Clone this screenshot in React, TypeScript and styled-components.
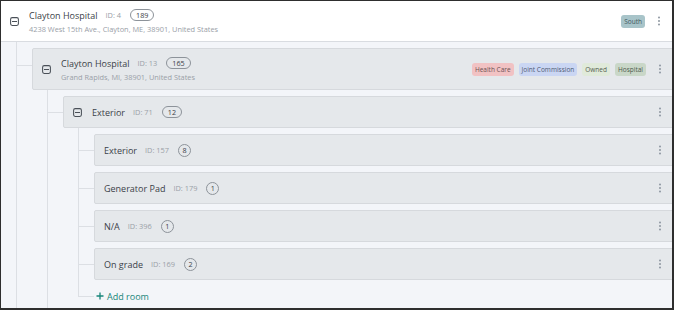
import { createGlobalStyle } from 'styled-components';
import styled from 'styled-components';

const GlobalStyle = createGlobalStyle`
  html, body { margin: 0; padding: 0; }
  body { font-family: "Open Sans", "Liberation Sans", sans-serif; color: #3a4047; }
`;

const Frame = styled.div`
  box-sizing: border-box;
  width: 674px;
  height: 310px;
  border: 1px solid #2e2e2e;
  border-right-width: 2px;
  border-bottom-width: 2px;
  background: #f3f5f9;
  display: flex;
  flex-direction: column;
  overflow: hidden;
`;

const TopRow = styled.div`
  flex: none;
  height: 40px;
  background: #fff;
  border-bottom: 1px solid #d9dce1;
  display: flex;
  align-items: center;
  padding: 0 8px 0 9px;
`;

const Body = styled.div`
  flex: 1;
  display: flex;
  flex-direction: column;
  margin-left: 15px;
  border-left: 1px solid #dcdfe4;
  padding: 6px 0 0 15px;
`;

const Node = styled.div`
  flex: 1;
  display: flex;
  flex-direction: column;
`;

const Card = styled.div<{ $h: number; $line?: number }>`
  position: relative;
  flex: none;
  box-sizing: border-box;
  height: ${(p) => p.$h}px;
  margin-right: -4px;
  background: #e5e8eb;
  border: 1px solid #d6d9dd;
  border-radius: 2px;
  display: flex;
  align-items: center;
  padding: 0 10px 0 9px;

  &::before {
    content: '';
    position: absolute;
    left: -16px;
    width: 15px;
    top: ${(p) => (p.$line ? `${p.$line}px` : '50%')};
    border-top: 1px solid #dcdfe4;
  }
`;

const Children = styled.div<{ $gap: number }>`
  flex: 1;
  display: flex;
  flex-direction: column;
  margin-left: 15px;
  border-left: 1px solid #dcdfe4;
  padding: ${(p) => p.$gap}px 0 0 15px;
`;

const RoomList = styled.div`
  display: flex;
  flex-direction: column;
  gap: 6px;
  margin-left: 15px;
  border-left: 1px solid #dcdfe4;
  padding: 6px 0 8px 15px;
`;

const AddRow = styled.div`
  position: relative;
  margin-left: 15px;
  height: 16px;
  display: flex;
  align-items: center;
  padding-left: 18px;
  font-size: 9px;
  color: #17857a;
  gap: 3px;

  &::before {
    content: '';
    position: absolute;
    left: 0;
    top: 0;
    width: 15px;
    height: 8px;
    border-left: 1px solid #dcdfe4;
    border-bottom: 1px solid #dcdfe4;
  }
`;

const Toggle = styled.svg`
  flex: none;
  width: 9px;
  height: 9px;
  margin-right: 10px;
`;

const Info = styled.div`
  display: flex;
  flex-direction: column;
  min-width: 0;
`;

const TitleLine = styled.div`
  display: flex;
  align-items: center;
`;

const Title = styled.span`
  font-size: 9px;
  color: #3b4148;
`;

const Id = styled.span`
  font-size: 7.4px;
  color: #9aa0a7;
  margin-left: 8px;
`;

const Count = styled.span<{ $round?: boolean }>`
  box-sizing: border-box;
  margin-left: 9px;
  height: ${(p) => (p.$round ? 13 : 12)}px;
  min-width: ${(p) => (p.$round ? 13 : 12)}px;
  padding: 0 ${(p) => (p.$round ? 0 : 5)}px;
  border: 1px solid #8d939a;
  border-radius: 7px;
  font-size: 7.2px;
  line-height: ${(p) => (p.$round ? 11 : 10)}px;
  text-align: center;
  color: #3b4148;
`;

const Address = styled.div`
  font-size: 7.4px;
  color: #9aa0a7;
  margin-top: 2px;
`;

const Spacer = styled.div`
  flex: 1;
`;

const Tags = styled.div`
  display: flex;
  gap: 5px;
  margin-right: 9px;
`;

const Tag = styled.span<{ $bg: string; $fg: string }>`
  height: 13px;
  padding: 0 3px;
  border-radius: 3px;
  background: ${(p) => p.$bg};
  color: ${(p) => p.$fg};
  font-size: 6.5px;
  line-height: 13px;
`;

const Kebab = styled.svg`
  flex: none;
  width: 10px;
  height: 10px;
`;

const MinusBox = () => (
  <Toggle viewBox="0 0 9 9">
    <rect x="0.6" y="0.6" width="7.8" height="7.8" rx="1.6" fill="none" stroke="#4a5058" strokeWidth="1.05" />
    <line x1="2" y1="4.5" x2="7" y2="4.5" stroke="#4a5058" strokeWidth="1.05" />
  </Toggle>
);

const Dots = () => (
  <Kebab viewBox="0 0 10 10">
    <circle cx="5" cy="1.5" r="1" fill="#8e97a1" />
    <circle cx="5" cy="5" r="1" fill="#8e97a1" />
    <circle cx="5" cy="8.5" r="1" fill="#8e97a1" />
  </Kebab>
);

const rooms = [
  { name: 'Exterior', id: 157, count: 8 },
  { name: 'Generator Pad', id: 179, count: 1 },
  { name: 'N/A', id: 396, count: 1 },
  { name: 'On grade', id: 169, count: 2 },
];

export default function App() {
  return (
    <>
      <GlobalStyle />
      <Frame>
        <TopRow>
          <MinusBox />
          <Info>
            <TitleLine>
              <Title>Clayton Hospital</Title>
              <Id>ID: 4</Id>
              <Count>189</Count>
            </TitleLine>
            <Address>4238 West 15th Ave., Clayton, ME, 38901, United States</Address>
          </Info>
          <Spacer />
          <Tags>
            <Tag $bg="#a8c4c9" $fg="#415a5e">South</Tag>
          </Tags>
          <Dots />
        </TopRow>
        <Body>
          <Node>
            <Card $h={42} $line={16}>
              <MinusBox />
              <Info>
                <TitleLine>
                  <Title>Clayton Hospital</Title>
                  <Id>ID: 13</Id>
                  <Count>165</Count>
                </TitleLine>
                <Address>Grand Rapids, MI, 38901, United States</Address>
              </Info>
              <Spacer />
              <Tags>
                <Tag $bg="#f1c2c3" $fg="#6c5253">Health Care</Tag>
                <Tag $bg="#cad6f3" $fg="#4e5a74">Joint Commission</Tag>
                <Tag $bg="#e0eada" $fg="#56604f">Owned</Tag>
                <Tag $bg="#c9d7c8" $fg="#4d5a4c">Hospital</Tag>
              </Tags>
              <Dots />
            </Card>
            <Children $gap={6}>
              <Node>
                <Card $h={32}>
                  <MinusBox />
                  <TitleLine>
                    <Title>Exterior</Title>
                    <Id>ID: 71</Id>
                    <Count>12</Count>
                  </TitleLine>
                  <Spacer />
                  <Dots />
                </Card>
                <RoomList>
                  {rooms.map((r) => (
                    <Card key={r.id} $h={32}>
                      <TitleLine>
                        <Title>{r.name}</Title>
                        <Id>ID: {r.id}</Id>
                        <Count $round>{r.count}</Count>
                      </TitleLine>
                      <Spacer />
                      <Dots />
                    </Card>
                  ))}
                </RoomList>
                <AddRow>
                  <svg width="8" height="8" viewBox="0 0 8 8">
                    <path d="M4 0.5v7M0.5 4h7" stroke="#17857a" strokeWidth="1.3" />
                  </svg>
                  Add room
                </AddRow>
              </Node>
            </Children>
          </Node>
        </Body>
      </Frame>
    </>
  );
}
